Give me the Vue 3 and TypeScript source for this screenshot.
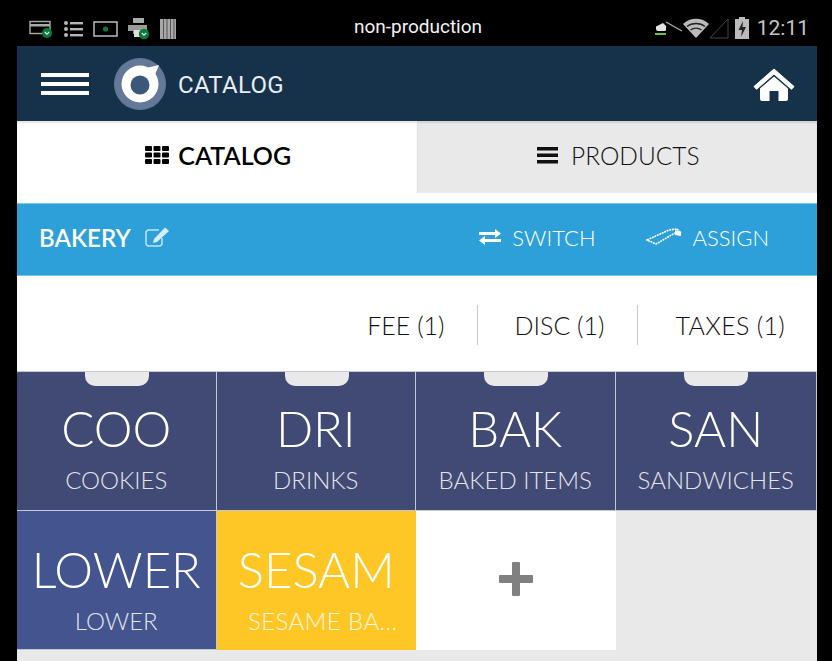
<script setup lang="ts">
interface Tile { big: string; small: string; kind: string; notch: boolean }
const tiles: Tile[] = [
  { big: 'COO', small: 'COOKIES', kind: 'navy', notch: true },
  { big: 'DRI', small: 'DRINKS', kind: 'navy', notch: true },
  { big: 'BAK', small: 'BAKED ITEMS', kind: 'navy', notch: true },
  { big: 'SAN', small: 'SANDWICHES', kind: 'navy', notch: true },
  { big: 'LOWER', small: 'LOWER', kind: 'blue', notch: false },
  { big: 'SESAM', small: 'SESAME BA...', kind: 'yellow', notch: false },
]
</script>

<template>
  <div class="screen">
    <div class="status">
      <div class="status-left">
        <svg width="26" height="20" viewBox="0 0 26 20">
          <rect x="1" y="2.5" width="20" height="12" fill="none" stroke="#aaa" stroke-width="1.4" />
          <rect x="1" y="5" width="20" height="2.5" fill="#aaa" />
          <circle cx="18" cy="14" r="5" fill="#0c7a36" />
          <path d="M15.800 13l2.200 2.200 2.200-2.200" fill="none" stroke="#cfe" stroke-width="1.2" />
        </svg>
        <svg width="22" height="18" viewBox="0 0 22 18">
          <g fill="#b5b5b5">
            <circle cx="3" cy="3" r="2" /><circle cx="3" cy="9" r="2" /><circle cx="3" cy="15" r="2" />
            <rect x="7" y="2" width="13" height="2.4" /><rect x="7" y="8" width="13" height="2.4" /><rect x="7" y="14" width="13" height="2.4" />
          </g>
        </svg>
        <svg width="26" height="18" viewBox="0 0 26 18">
          <rect x="1" y="2" width="23" height="14" fill="none" stroke="#b0b0b0" stroke-width="1.6" />
          <circle cx="12.5" cy="9" r="2.6" fill="#0c7a36" />
        </svg>
        <svg width="24" height="24" viewBox="0 0 24 24">
          <rect x="6" y="1" width="11" height="5" fill="#aaa" />
          <path d="M1 8h19v9H6v-3H1z" fill="#999" />
          <rect x="7" y="13" width="8" height="7" fill="#ddd" />
          <circle cx="17" cy="17" r="5.2" fill="#0c7a36" />
          <path d="M14.8 16l2.2 2.2 2.2-2.2" fill="none" stroke="#cfe" stroke-width="1.2" />
        </svg>
        <svg width="18" height="22" viewBox="0 0 18 22">
          <rect x="1" y="1" width="16" height="20" fill="#a8a8a8" />
          <path d="M4.5 1v20M8 1v20M11.5 1v20M15 1v20" stroke="#555" stroke-width="1" />
        </svg>
      </div>
      <div class="status-title">non-production</div>
      <div class="status-right">
        <svg class="usb" width="28" height="18" viewBox="0 0 28 18">
          <path d="M1 7.500l7-3.500 3 3v4a1 1 0 0 1-1 1H3a2 2 0 0 1-2-2z" fill="#e2e2e2" />
          <path d="M11 3l16 9" stroke="#aaa" stroke-width="1.4" />
          <rect x="0" y="14" width="11" height="2" fill="#6fbf3a" />
        </svg>
        <svg class="wifi" width="28" height="20" viewBox="0 0 28 20">
          <path d="M1 6C8-1 20-1 27 6L14 20z" fill="#bbb" />
          <path d="M5 8.500c5-4 13-4 18 0M8.500 12c3.200-2.500 7.800-2.500 11 0" fill="none" stroke="#222" stroke-width="1.300" />
        </svg>
        <svg class="signal" width="20" height="22" viewBox="0 0 20 22">
          <path d="M1 21L19 2v19z" fill="none" stroke="#444" stroke-width="1" />
        </svg>
        <svg class="battery" width="14" height="22" viewBox="0 0 14 22">
          <rect x="4" y="0" width="6" height="3" fill="#bbb" />
          <rect x="0" y="2" width="14" height="20" fill="#bbb" />
          <path d="M8 4L3.500 13H7l-1 7 5-10H7.500z" fill="#222" />
        </svg>
        <span class="clock">12:11</span>
      </div>
    </div>

    <header class="appbar">
      <div class="burger"><i></i><i></i><i></i></div>
      <svg class="logo" width="52" height="52" viewBox="0 0 52 52">
        <circle cx="26" cy="26" r="26" fill="#64799a" />
        <circle cx="26" cy="26" r="18.500" fill="#fff" />
        <path d="M32 10l13-3-5 12z" fill="#fff" />
        <circle cx="26" cy="27" r="9.500" fill="#3c5878" />
      </svg>
      <span class="appbar-title">CATALOG</span>
      <svg class="home" width="44" height="36" viewBox="0 0 44 36">
        <path d="M22 3L2 20.500l2.500 2.800L22 8l17.500 15.300 2.500-2.800z" fill="#fff" stroke="#fff" stroke-linejoin="round" />
        <path d="M8 22.500L22 10.500l14 12V33a2 2 0 0 1-2 2h-7.500V25h-9v10H10a2 2 0 0 1-2-2z" fill="#fff" />
      </svg>
    </header>

    <nav class="tabs">
      <div class="tab active">
        <svg width="24" height="18" viewBox="0 0 24 18">
          <g fill="#000">
            <rect x="0" y="0" width="7" height="5" rx="1" /><rect x="8.500" y="0" width="7" height="5" rx="1" /><rect x="17" y="0" width="7" height="5" rx="1" />
            <rect x="0" y="6.500" width="7" height="5" rx="1" /><rect x="8.500" y="6.500" width="7" height="5" rx="1" /><rect x="17" y="6.500" width="7" height="5" rx="1" />
            <rect x="0" y="13" width="7" height="5" rx="1" /><rect x="8.500" y="13" width="7" height="5" rx="1" /><rect x="17" y="13" width="7" height="5" rx="1" />
          </g>
        </svg>
        <span>CATALOG</span>
      </div>
      <div class="tab">
        <svg width="21" height="18" viewBox="0 0 21 18">
          <g fill="#111"><rect y="1" width="21" height="3.500" /><rect y="7.500" width="21" height="3.500" /><rect y="14" width="21" height="3.500" /></g>
        </svg>
        <span>PRODUCTS</span>
      </div>
    </nav>

    <section class="bluebar">
      <span class="bakery">BAKERY</span>
      <svg class="edit" width="25" height="20" viewBox="0 0 25 20">
        <path d="M17 11v5a3 3 0 0 1-3 3H4a3 3 0 0 1-3-3V6a3 3 0 0 1 3-3h10" fill="none" stroke="#bfe3f7" stroke-width="1.500" />
        <path d="M20 0.500l4 3.500L12 15l-4 1 1-4z" fill="#d6eefb" />
      </svg>
      <div class="actions">
        <div class="action">
          <svg width="22" height="16" viewBox="0 0 22 16">
            <path d="M0 3h16V0l6 4.500-6 4.500V6H0zM22 10H6V7l-6 4.500L6 16v-3h16z" fill="#fff" />
          </svg>
          <span>SWITCH</span>
        </div>
        <div class="action">
          <svg width="36" height="18" viewBox="0 0 36 18">
            <path d="M1 12L23 2l8-1 3 3-5 1-19 11z" fill="none" stroke="#fff" stroke-width="1.600" stroke-dasharray="2 0.700" />
            <path d="M29 2l6 2v4l-6-1z" fill="#fff" />
          </svg>
          <span>ASSIGN</span>
        </div>
      </div>
    </section>

    <section class="fees">
      <span class="fee">FEE (1)</span>
      <span class="fee">DISC (1)</span>
      <span class="fee">TAXES (1)</span>
    </section>

    <section class="grid">
      <div v-for="t in tiles" :key="t.big" class="tile" :class="t.kind">
        <span v-if="t.notch" class="notch"></span>
        <span class="big">{{ t.big }}</span>
        <span class="small">{{ t.small }}</span>
      </div>
      <div class="tile add">
        <svg width="34" height="34" viewBox="0 0 34 34">
          <path d="M14 0h6a1 1 0 0 1 1 1v12h12a1 1 0 0 1 1 1v6a1 1 0 0 1-1 1H21v12a1 1 0 0 1-1 1h-6a1 1 0 0 1-1-1V21H1a1 1 0 0 1-1-1v-6a1 1 0 0 1 1-1h12V1a1 1 0 0 1 1-1z" fill="#808080" />
        </svg>
      </div>
    </section>
  </div>
</template>

<style>
html, body { margin: 0; background: #000; }
</style>

<style scoped>
.screen {
  width: 832px;
  height: 661px;
  box-sizing: border-box;
  padding: 0 15px 0 17px;
  background: #000;
  overflow: hidden;
  display: flex;
  flex-direction: column;
  font-family: Lato, "Liberation Sans", sans-serif;
}
.status {
  height: 46px;
  margin: 0 -15px 0 -17px;
  padding: 10px 23px 0 29px;
  box-sizing: border-box;
  display: grid;
  grid-template-columns: 1fr auto 1fr;
  align-items: center;
  flex: none;
}
.status-left { display: flex; align-items: center; gap: 8px; position: relative; top: 1px; }
.status-title {
  font: 400 19px Roboto, sans-serif;
  color: #f2f2f2;
  position: relative;
  top: -2px;
  left: -1px;
}
.status-right { display: flex; align-items: center; justify-content: flex-end; gap: 2px; }
.usb { margin-right: -3px; }
.wifi { margin-right: -3px; }
.signal { margin-right: 4px; }
.clock { font: 400 21px Roboto, sans-serif; color: #c4c4c4; margin-left: 6px; }
.appbar {
  height: 75px;
  flex: none;
  background: #16324a;
  display: flex;
  align-items: center;
  padding: 0 21px 0 24px;
  box-sizing: border-box;
}
.burger { width: 48px; display: flex; flex-direction: column; gap: 5px; margin-right: 25px; }
.burger i { display: block; height: 4px; background: #fff; }
.appbar-title { font: 400 24px Roboto, sans-serif; color: #e8edf1; margin-left: 12px; letter-spacing: 0.3px; position: relative; top: 1px; }
.home { margin-left: auto; }
.tabs {
  height: 82px;
  flex: none;
  display: grid;
  grid-template-columns: 399.500px 1fr;
  grid-template-rows: 72px;
  background: #fff;
}
.tab {
  background: #e9e9e9;
  display: flex;
  align-items: center;
  justify-content: center;
  gap: 13px;
  font-size: 24.500px;
  font-weight: 300;
  color: #111;
  padding: 0 0 4px 3px;
  box-sizing: border-box;
  box-shadow: inset 0 2px 2px rgba(0, 0, 0, 0.1);
}
.tab.active { background: transparent; font-weight: 600; font-size: 25px; color: #000; gap: 9px; padding-left: 3px; }
.bluebar {
  height: 73px;
  flex: none;
  background: #2da0da;
  border-top: 1px solid #7cc5ea;
  border-bottom: 1px solid #7cc5ea;
  box-sizing: border-box;
  display: flex;
  align-items: center;
  padding: 0 0 5px 22px;
  color: #fff;
}
.bakery { font-size: 24px; font-weight: 600; }
.edit { margin-left: 14px; }
.actions { margin-left: auto; display: flex; align-items: center; gap: 50px; margin-right: 48px; font-size: 22px; font-weight: 300; }
.action { display: flex; align-items: center; gap: 11px; }
.fees {
  height: 95px;
  flex: none;
  background: #fff;
  display: flex;
  align-items: center;
  justify-content: flex-end;
  font-size: 25px;
  font-weight: 300;
  color: #111;
  padding: 3px 32px 0 0;
  box-sizing: border-box;
}
.fee { padding: 5px 32px 5px 0; border-right: 1px solid #c8c8c8; margin-right: 38px; }
.fee:first-child { margin-right: 37px; }
.fee:last-child { padding-right: 0; border-right: 0; margin-right: 0; letter-spacing: 0.3px; }
.grid {
  flex: 1;
  background: #e9e9e9;
  display: grid;
  grid-template-columns: repeat(3, 199.500px) 1fr;
  grid-template-rows: 140px 139px;
  align-content: start;
}
.tile {
  position: relative;
  display: flex;
  flex-direction: column;
  align-items: center;
  color: #fff;
  box-sizing: border-box;
  overflow: hidden;
}
.tile.navy { background: #414a75; border-top: 1px solid #c5c7d3; border-bottom: 1px solid #c5c7d3; border-right: 1.500px solid #c5c7d3; }
.tile.blue { background: #43548e; border-right: 1px solid #c5c7d3; border-bottom: 1px solid #c5c7d3; }
.tile.yellow { background: #ffc726; }
.tile.add { background: #fff; justify-content: center; padding-bottom: 4px; }
.notch {
  position: absolute;
  top: 0;
  left: 68px;
  width: 64px;
  height: 14px;
  background: #e9e9e9;
  border-radius: 0 0 10px 10px;
}
.big { font-size: 49px; font-weight: 300; line-height: 60px; margin-top: 26px; white-space: nowrap; }
.blue .big, .yellow .big { margin-top: 28px; }
.small { font-size: 24px; font-weight: 300; line-height: 30px; margin-top: 7px; opacity: 0.85; white-space: nowrap; }
.yellow .small { margin-left: 13px; letter-spacing: 0.4px; }
</style>
